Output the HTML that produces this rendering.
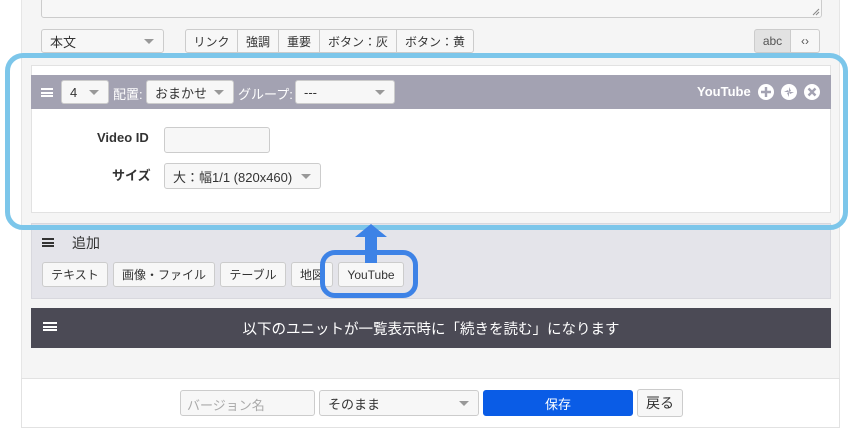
<!DOCTYPE html>
<html><head><meta charset="utf-8"><style>
*{box-sizing:border-box;margin:0;padding:0}
body{width:853px;height:446px;background:#fff;position:relative;overflow:hidden;font-family:"Liberation Sans","Noto Sans CJK JP",sans-serif;font-size:13px;color:#333}
.a{position:absolute}
.sel{background:#f7f7f7;border:1px solid #ccc;border-radius:3px;font-size:13px;padding-left:8px;display:flex;align-items:center}
.sel:after{content:"";position:absolute;right:9px;top:50%;margin-top:-2px;border:5px solid transparent;border-top:5px solid #999;border-bottom:0}
.btn{background:#f7f7f7;border:1px solid #ccc;border-radius:3px;display:flex;align-items:center;justify-content:center;font-size:12px}
.ham{width:12px;height:9px;border-top:2px solid currentColor;border-bottom:2px solid currentColor;position:absolute}
.ham:after{content:"";position:absolute;left:0;right:0;top:1.5px;height:2px;background:currentColor}
.ic{width:16px;height:16px;border-radius:50%;background:#fff;position:absolute;top:84px}
</style></head><body>
<div class="a" style="left:21px;top:0;width:819px;height:378px;background:#f5f5f5;border-left:1px solid #e6e6e6;border-right:1px solid #e6e6e6"></div>
<div class="a" style="left:41px;top:-2px;width:781px;height:20px;background:#f7f7f7;border:1px solid #ccc;border-radius:3px"></div>
<svg class="a" style="left:812px;top:8px" width="8" height="8"><path d="M1 7L7 1M4 7L7 4" stroke="#888" stroke-width="1"/></svg>
<div class="a sel" style="left:41px;top:29px;width:123px;height:24px">本文</div>
<div class="a" style="left:185px;top:29px;height:24px;display:flex;font-size:12px">
<div class="btn" style="width:53px;border-radius:3px 0 0 3px">リンク</div><div class="btn" style="width:41px;border-radius:0;border-left:0">強調</div><div class="btn" style="width:41px;border-radius:0;border-left:0">重要</div><div class="btn" style="width:77px;border-radius:0;border-left:0">ボタン：灰</div><div class="btn" style="width:77px;border-radius:0 3px 3px 0;border-left:0">ボタン：黄</div></div>
<div class="a" style="left:754px;top:29px;height:24px;display:flex"><div class="btn" style="width:37px;background:#e2e2e2;border-radius:3px 0 0 3px;color:#555">abc</div><div class="btn" style="width:29px;border-left:0;border-radius:0 3px 3px 0;color:#555">‹›</div></div>
<div class="a" style="left:31px;top:65px;width:800px;height:148px;background:#fff;border:1px solid #e2e2e2"></div>
<div class="a" style="left:31px;top:75px;width:800px;height:34px;background:#a3a2b2;color:#fff"></div>
<div class="ham" style="left:41px;top:88px;color:#fff"></div>
<div class="a sel" style="left:61px;top:80px;width:48px;height:24px">4</div>
<div class="a" style="left:113px;top:84px;color:#fff">配置:</div>
<div class="a sel" style="left:146px;top:80px;width:88px;height:24px">おまかせ</div>
<div class="a" style="left:238px;top:84px;color:#fff">グループ:</div>
<div class="a sel" style="left:295px;top:80px;width:100px;height:24px">---</div>
<div class="a" style="left:697px;top:84px;color:#fff;font-weight:bold;font-size:13px">YouTube</div>
<div class="ic" style="left:758px"><svg width="16" height="16"><path d="M8 3v10M3 8h10" stroke="#a3a2b2" stroke-width="2.4"/></svg></div>
<div class="ic" style="left:781px"><svg width="16" height="16"><path d="M8 3l2 4-2 1zM13 8l-4 2-1-2zM8 13l-2-4 2-1zM3 8l4-2 1 2z" fill="#a3a2b2"/></svg></div>
<div class="ic" style="left:804px"><svg width="16" height="16"><path d="M4.5 4.5l7 7M11.5 4.5l-7 7" stroke="#a3a2b2" stroke-width="2.4"/></svg></div>
<div class="a" style="left:97px;top:130px;font-weight:bold;font-size:13px">Video ID</div>
<div class="a" style="left:164px;top:127px;width:106px;height:26px;background:#f7f7f7;border:1px solid #ccc;border-radius:3px"></div>
<div class="a" style="left:112px;top:165px;font-weight:bold;font-size:13px">サイズ</div>
<div class="a sel" style="left:164px;top:163px;width:157px;height:26px">大：幅1/1 (820x460)</div>
<div class="a" style="left:31px;top:223px;width:800px;height:76px;background:#e4e4ea;border:1px solid #d8d8de"></div>
<div class="ham" style="left:42px;top:238px;color:#333"></div>
<div class="a" style="left:72px;top:233px;font-size:14px">追加</div>
<div class="a btn" style="left:42px;top:262px;width:66px;height:25px">テキスト</div>
<div class="a btn" style="left:113px;top:262px;width:102px;height:25px">画像・ファイル</div>
<div class="a btn" style="left:220px;top:262px;width:66px;height:25px">テーブル</div>
<div class="a btn" style="left:291px;top:262px;width:42px;height:25px;justify-content:flex-start;padding-left:8px;overflow:hidden">地図</div>
<div class="a btn" style="left:338px;top:262px;width:66px;height:25px">YouTube</div>
<div class="a" style="left:31px;top:308px;width:800px;height:40px;background:#4b4a55"></div>
<div class="ham" style="left:43px;top:322px;color:#fff;width:14px"></div>
<div class="a" style="left:31px;top:318px;width:800px;text-align:center;color:#fff;font-size:14.5px">以下のユニットが一覧表示時に「続きを読む」になります</div>
<div class="a" style="left:21px;top:378px;width:819px;height:50px;background:#fff;border:1px solid #e2e2e2"></div>
<div class="a" style="left:180px;top:390px;width:135px;height:26px;background:#f7f7f7;border:1px solid #ccc;border-radius:3px;color:#aaa;padding:4px 6px;font-size:13px">バージョン名</div>
<div class="a sel" style="left:319px;top:390px;width:160px;height:26px">そのまま</div>
<div class="a btn" style="left:483px;top:390px;width:150px;height:26px;background:#0a5ce6;border-color:#0a5ce6;color:#fff;font-size:13px">保存</div>
<div class="a btn" style="left:637px;top:389px;width:46px;height:28px;font-size:14px">戻る</div>
<div class="a" style="left:5px;top:53px;width:843px;height:177px;border:5px solid #7cc6ea;border-radius:18px"></div>
<svg class="a" style="left:352px;top:223px" width="38" height="40"><path d="M19 1L3 14h10v26h12V14h10z" fill="#3d82e6"/></svg>
<div class="a" style="left:320px;top:250px;width:98px;height:48px;border:5px solid #3d82e6;border-radius:15px"></div>
</body></html>
